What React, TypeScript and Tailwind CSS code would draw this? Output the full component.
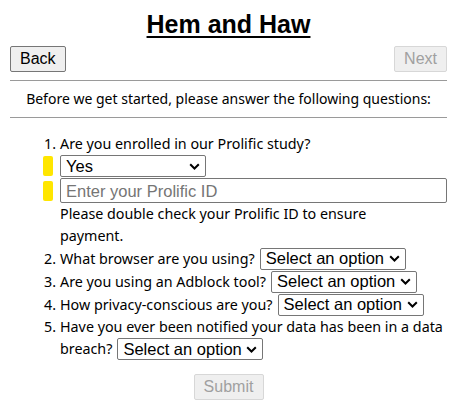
import React from 'react';

const Chevron = () => (
  <svg width="11" height="7" viewBox="0 0 11 7" className="shrink-0">
    <path d="M1.2 1.2 L5.5 5.5 L9.8 1.2" fill="none" stroke="#000" strokeWidth="2" />
  </svg>
);

const FakeSelect = ({ value }: { value: string }) => (
  <span className="inline-flex items-center justify-between w-[146px] h-[22px] shrink-0 border border-[#767676] rounded-[2px] bg-white pl-[5px] pr-[5px] font-['Liberation_Sans'] text-[16.5px] leading-none text-black">
    <span>{value}</span>
    <Chevron />
  </span>
);

const Mark = () => <span className="w-[10px] h-[20px] bg-[#ffe600] rounded-[2px] shrink-0" />;

const Num = ({ n }: { n: number }) => (
  <span className="w-[50px] shrink-0 text-right pr-[4px]">{n}.</span>
);

export default function App() {
  return (
    <div className="pl-[10px] pr-[6px] pt-[10px] font-['Noto_Sans'] text-black bg-white min-h-[407px]">
      <h1 className="text-center font-['Liberation_Sans'] text-[25px] font-bold underline underline-offset-[3px] decoration-2 leading-[28px]">
        Hem and Haw
      </h1>
      <div className="flex justify-between mt-[8px]">
        <button className="h-[26px] px-[9px] border border-[#767676] rounded-[2px] bg-[#efefef] font-['Liberation_Sans'] text-[16px]">
          Back
        </button>
        <button className="h-[26px] px-[9px] border border-[#d7d7d7] rounded-[2px] bg-[#efefef] text-[#a0a0a0] font-['Liberation_Sans'] text-[16px]">
          Next
        </button>
      </div>
      <hr className="mt-[8px] border-t border-[#9a9a9a]" />
      <p className="text-center text-[14px] leading-[36px] whitespace-nowrap">
        Before we get started, please answer the following questions:
      </p>
      <hr className="border-t border-[#9a9a9a]" />

      <div className="mt-[15px] text-[14.3px] leading-[22px]">
        <div className="flex">
          <Num n={1} />
          <div className="flex-1">
            <div>Are you enrolled in our Prolific study?</div>
            <div className="flex items-center gap-[7px] -ml-[17px]">
              <Mark />
              <FakeSelect value="Yes" />
            </div>
            <div className="flex items-center gap-[7px] -ml-[17px] mt-[1px]">
              <Mark />
              <span className="flex-1 h-[25px] border border-[#767676] rounded-[2px] px-[5px] flex items-center font-['Liberation_Sans'] text-[16.5px] text-[#757575]">
                Enter your Prolific ID
              </span>
            </div>
            <p>
              Please double check your Prolific ID to ensure
              <br />
              payment.
            </p>
          </div>
        </div>

        <div className="flex items-center h-[23px]">
          <Num n={2} />
          <span className="mr-[5px]">What browser are you using?</span>
          <FakeSelect value="Select an option" />
        </div>
        <div className="flex items-center h-[23px]">
          <Num n={3} />
          <span className="mr-[5px]">Are you using an Adblock tool?</span>
          <FakeSelect value="Select an option" />
        </div>
        <div className="flex items-center h-[23px]">
          <Num n={4} />
          <span className="mr-[5px]">How privacy-conscious are you?</span>
          <FakeSelect value="Select an option" />
        </div>
        <div className="flex">
          <Num n={5} />
          <div className="flex-1">
            <div className="whitespace-nowrap">Have you ever been notified your data has been in a data</div>
            <div className="flex items-center h-[22px]">
              <span className="mr-[5px]">breach?</span>
              <FakeSelect value="Select an option" />
            </div>
          </div>
        </div>
      </div>

      <div className="flex justify-center mt-[14px]">
        <button className="h-[26px] w-[70px] border border-[#d7d7d7] rounded-[2px] bg-[#efefef] text-[#a0a0a0] font-['Liberation_Sans'] text-[16px]">
          Submit
        </button>
      </div>
    </div>
  );
}
